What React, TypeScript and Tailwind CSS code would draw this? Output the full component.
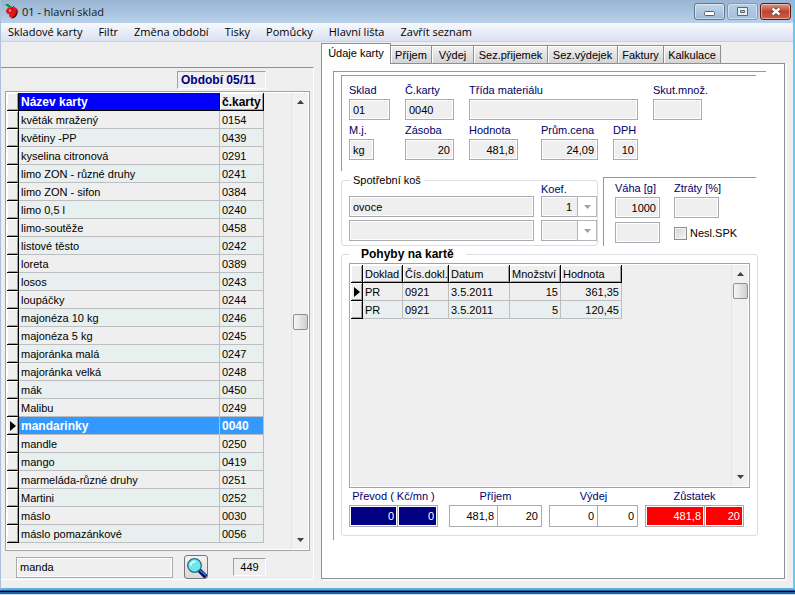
import { useId, type ReactNode } from 'react';

const cards: [string, string][] = [
  ['květák mražený', '0154'],
  ['květiny -PP', '0439'],
  ['kyselina citronová', '0291'],
  ['limo ZON - různé druhy', '0241'],
  ['limo ZON - sifon', '0384'],
  ['limo 0,5 l', '0240'],
  ['limo-soutěže', '0458'],
  ['listové těsto', '0242'],
  ['loreta', '0389'],
  ['losos', '0243'],
  ['loupáčky', '0244'],
  ['majonéza 10 kg', '0246'],
  ['majonéza 5 kg', '0245'],
  ['majoránka malá', '0247'],
  ['majoránka velká', '0248'],
  ['mák', '0450'],
  ['Malibu', '0249'],
  ['mandarinky', '0040'],
  ['mandle', '0250'],
  ['mango', '0419'],
  ['marmeláda-různé druhy', '0251'],
  ['Martini', '0252'],
  ['máslo', '0030'],
  ['máslo pomazánkové', '0056'],
];
const selectedCode = '0040';

const moves = [
  ['PR', '0921', '3.5.2011', '15', '361,35'],
  ['PR', '0921', '3.5.2011', '5', '120,45'],
];

const menu = ['Skladové karty', 'Filtr', 'Změna období', 'Tisky', 'Pomůcky', 'Hlavní lišta', 'Zavřít seznam'];

const tabs = [
  { name: 'Příjem', width: 'w-[41px]' },
  { name: 'Výdej', width: 'w-[42px]' },
  { name: 'Sez.přijemek', width: 'w-[74px]' },
  { name: 'Sez.výdejek', width: 'w-[70px]' },
  { name: 'Faktury', width: 'w-[46px]' },
  { name: 'Kalkulace', width: 'w-[57px]' },
];

const box = 'h-[21px] border border-[#a9abae] bg-[#efefef] px-[3px] text-black shadow-[inset_0_0_0_1px_#fff] outline-none';

function Field({ label, value = '', width, right = false }: { label: string; value?: string; width: string; right?: boolean }) {
  const id = useId();
  return (
    <div className={`flex flex-col ${width}`}>
      <label htmlFor={id} className="h-[17px] whitespace-nowrap text-[#000066]">{label}</label>
      <input id={id} readOnly defaultValue={value} className={`w-full ${box} ${right ? 'text-right' : ''}`} />
    </div>
  );
}

function Triangle({ up = false, gray = false }: { up?: boolean; gray?: boolean }) {
  return (
    <svg width="7" height="4" viewBox="0 0 7 4" aria-hidden="true">
      <path d={up ? 'M0 4L3.5 0L7 4Z' : 'M0 0H7L3.5 4Z'} fill={gray ? '#a0a0a0' : '#404040'} />
    </svg>
  );
}

function ScrollBar({ thumb }: { thumb: string }) {
  return (
    <div className="flex w-[17px] shrink-0 flex-col items-center border-l border-[#e4e4e4] bg-[#f1f1f1]">
      <div className="flex h-[18px] items-center"><Triangle up /></div>
      <div className={`h-4 w-[15px] rounded-xs border border-[#8f8f8f] bg-linear-to-r from-[#f6f6f6] to-[#cfcfcf] ${thumb}`} />
      <div className="mt-auto flex h-[18px] items-center"><Triangle /></div>
    </div>
  );
}

function RowMark({ active = false }: { active?: boolean }) {
  return (
    <td className="h-[18px] border-r border-b border-black bg-[#efefef] p-0 shadow-[inset_1px_1px_0_#fff,inset_-1px_-1px_0_#a0a0a0]">
      {active && (
        <svg width="7" height="10" viewBox="0 0 7 10" className="ml-[3px]" aria-label="Aktuální řádek">
          <path d="M0 0L6 5L0 10Z" fill="#000" />
        </svg>
      )}
    </td>
  );
}

const headCell =
  'h-[18px] border-r border-b border-black p-0 pl-0.5 text-left whitespace-nowrap shadow-[inset_1px_1px_0_#fff,inset_-1px_-1px_0_#a0a0a0]';

function Combo({ label, value }: { label: string; value: string }) {
  return (
    <div className="relative h-[21px] w-14">
      <select aria-label={label} defaultValue={value} className={`w-full appearance-none rounded-none pr-6 [text-align-last:right] ${box}`}>
        <option>{value}</option>
      </select>
      <span className="pointer-events-none absolute top-0 right-0 flex h-[21px] w-5 items-center justify-center border border-[#b4b6b9] bg-white">
        <Triangle gray />
      </span>
    </div>
  );
}

function Total({ label, values, width, first, tone }: { label: string; values: [string, string]; width: string; first: string; tone: string }) {
  return (
    <div role="group" aria-label={label} className={width}>
      <div className="h-[17px] text-center whitespace-nowrap text-[#000066]">{label}</div>
      <div className="flex h-[22px] border border-[#a9abae] bg-white">
        <input readOnly aria-label={`${label} Kč`} defaultValue={values[0]} className={`h-5 border-r border-r-[#a9abae] pr-[3px] text-right shadow-[inset_0_0_0_1px_#fff] outline-none ${first} ${tone}`} />
        <input readOnly aria-label={`${label} množství`} defaultValue={values[1]} className={`h-5 min-w-0 flex-1 pr-[3px] text-right shadow-[inset_0_0_0_1px_#fff] outline-none ${tone}`} />
      </div>
    </div>
  );
}

function WindowButton({ name, look, children }: { name: string; look: string; children: ReactNode }) {
  return (
    <button aria-label={name} className={`flex h-[17px] w-[31px] items-center justify-center rounded-[3px] border shadow-[inset_0_0_0_1px_#ffffff70] ${look}`}>
      {children}
    </button>
  );
}

function TitleBar() {
  return (
    <header className="flex h-[23px] items-center bg-linear-to-b from-[#98b4d2] to-[#b9d1ea] pr-0.5 pl-[3px]">
      <svg width="15" height="17" viewBox="0 0 15 17" aria-hidden="true">
        <path d="M3 6C4 4 7 4 8 5C11 3 14 5 13.500 9C13 13 9 17 6 14C4 13 6 12 5 11C2 11 3 9 2 9C2 8 2 7 3 6Z" fill="#e3141c" />
        <path d="M13 6C15 10 12 16 7 15.500C10 14 12.500 11 13 6Z" fill="#4a0a0a" />
        <path d="M1 1L4 1L8 4L8 5L4 4Z" fill="#128a34" />
        <path d="M7 6L10 3" stroke="#1c3a18" />
        <path d="M5 6.500H7V8.500H5Z" fill="#ff9c90" />
      </svg>
      <h1 className="ml-[3px] font-['Open_Sans',sans-serif] text-[11px] text-[#101820]">01 - hlavní sklad</h1>
      <div className="ml-auto flex gap-0.5">
        <WindowButton name="Minimalizovat" look="border-[#5f7893] bg-linear-to-b from-[#c5d7ea] to-[#9db8d4]">
          <svg width="11" height="5" viewBox="0 0 11 5" className="mt-1"><rect x=".5" y=".5" width="10" height="4" rx="1" fill="#fff" stroke="#53606e" /></svg>
        </WindowButton>
        <WindowButton name="Maximalizovat" look="border-[#8199b5] bg-linear-to-b from-[#b5cce5] to-[#a5c0de]">
          <svg width="11" height="9" viewBox="0 0 11 9"><path d="M.5 .5H10.500V8.500H.5Z M3.500 3.500H7.500V5.500H3.500Z" fill="#e8eef5" stroke="#5b6875" fillRule="evenodd" /></svg>
        </WindowButton>
        <WindowButton name="Zavřít" look="border-[#5b1c16] bg-linear-to-b from-[#dc9687] via-[#bf4430] to-[#c8614c]">
          <svg width="12" height="9" viewBox="0 0 12 9">
            <path d="M2.500 1.500L9.500 7.500M9.500 1.500L2.500 7.500" stroke="#5a3a3a" strokeWidth="4" />
            <path d="M2.500 1.500L9.500 7.500M9.500 1.500L2.500 7.500" stroke="#fff" strokeWidth="2.400" />
          </svg>
        </WindowButton>
      </div>
    </header>
  );
}

function CardList() {
  return (
    <section className="mt-[25px] flex w-[313px] shrink-0 flex-col self-start border-t border-r border-b border-t-[#8c8f94] border-r-white border-b-white pt-[3px] pl-1">
      <div className="mr-[47px] h-[18px] w-[89px] self-end border border-t-[#a0a0a0] border-r-white border-b-white border-l-[#a0a0a0] pl-[3px] text-[12px] leading-4 font-bold text-[#000080]">
        Období 05/11
      </div>
      <div className="mt-0.5 mr-[3px] flex h-[460px] justify-between border border-[#a0a3a8] p-px shadow-[inset_0_0_0_1px_#fff]">
        <table className="w-[257px] table-fixed border-separate border-spacing-0 self-start">
          <colgroup>
            <col className="w-3" />
            <col className="w-[201px]" />
            <col className="w-11" />
          </colgroup>
          <thead className="text-[12px] leading-4">
            <tr>
              <RowMark />
              <th className="h-[18px] border-r border-b border-black bg-[#0000ff] p-0 pl-0.5 text-left text-white">Název karty</th>
              <th className={headCell}>č.karty</th>
            </tr>
          </thead>
          <tbody>
            {cards.map(([name, code], i) => {
              const active = code === selectedCode;
              const tone = active ? 'bg-[#3399ff] text-white font-bold text-[12px]' : i % 2 ? 'bg-[#e8efef]' : 'bg-[#efefef]';
              return (
                <tr key={code} className={tone}>
                  <RowMark active={active} />
                  <td className="h-[18px] border-r border-b border-[#bcbec0] p-0 pl-0.5 leading-4">{name}</td>
                  <td className="h-[18px] border-r border-b border-[#bcbec0] p-0 pl-0.5 leading-4">{code}</td>
                </tr>
              );
            })}
          </tbody>
        </table>
        <ScrollBar thumb="mt-[203px]" />
      </div>
      <form className="mt-1 flex h-6 items-center pl-[11px]">
        <input aria-label="Hledat kartu" defaultValue="manda" className={`w-[157px] ${box}`} />
        <button type="button" aria-label="Hledat" className="ml-[11px] flex h-6 w-6 items-center justify-center rounded-[3px] border border-[#777] bg-linear-to-b from-[#f4f4f4] to-[#d8d8d8]">
          <svg width="21" height="21" viewBox="0 0 21 21" aria-hidden="true">
            <path d="M13 13L20 20" stroke="#0a0a60" strokeWidth="4.500" />
            <path d="M14 13.500L20 18.500" stroke="#2f7de8" strokeWidth="1.600" />
            <circle cx="8.500" cy="8.500" r="6.800" fill="#6fe6ea" stroke="#2c6e80" strokeWidth="1.300" />
            <path d="M4.500 8.500C5 6 7 4.500 9.500 4.500" stroke="#d8ffff" strokeWidth="2" fill="none" />
          </svg>
        </button>
        <output className="ml-[25px] h-[18px] w-[33px] border border-t-[#a0a0a0] border-r-white border-b-white border-l-[#a0a0a0] text-center leading-4">449</output>
      </form>
    </section>
  );
}

function CardDetail() {
  const vaha2 = useId();
  return (
    <section className="mt-px ml-[7px] flex min-w-0 flex-1 flex-col pr-2">
      <div role="tablist" className="flex h-5 items-end">
        <button role="tab" aria-selected="true" className="z-10 -mb-px h-[21px] w-[70px] shrink-0 border border-b-0 border-[#8c8f94] bg-white pb-0.5 whitespace-nowrap">
          Údaje karty
        </button>
        {tabs.map((t) => (
          <button key={t.name} role="tab" aria-selected="false" className={`h-[18px] shrink-0 border border-b-0 border-l-0 border-[#8c8f94] bg-linear-to-b from-[#f2f2f2] to-[#d4d4d4] whitespace-nowrap shadow-[inset_1px_1px_0_#fff] ${t.width}`}>
            {t.name}
          </button>
        ))}
      </div>
      <div role="tabpanel" className="border border-[#8c8f94] bg-white pt-[7px] pr-[18px] pb-[38px] pl-[11px] shadow-[2px_2px_0_#fafafa]">
        <div className="border-t border-l border-[#979797] pt-[3px] pb-1 pl-[7px]">
          <div className="mr-2.5 flex h-24 flex-col gap-0.5 border-t border-l border-[#979797] pt-[6px] pl-[7px]">
            <div className="flex gap-[15px]">
              <Field label="Sklad" value="01" width="w-[41px]" />
              <Field label="Č.karty" value="0040" width="w-[49px]" />
              <Field label="Třída materiálu" width="w-[169px]" />
              <Field label="Skut.množ." width="w-[49px]" />
            </div>
            <div className="flex gap-[15px]">
              <div className="w-[41px]"><Field label="M.j." value="kg" width="w-[25px]" /></div>
              <Field label="Zásoba" value="20" right width="w-[49px]" />
              <div className="w-[57px]"><Field label="Hodnota" value="481,8" right width="w-[49px]" /></div>
              <Field label="Prům.cena" value="24,09" right width="w-[57px]" />
              <Field label="DPH" value="10" right width="w-[25px]" />
            </div>
          </div>
          <div className="mt-px flex h-[74px] gap-[5px]">
            <fieldset className="w-[257px] rounded-[3px] border border-[#d5dfe5] pl-[7px]">
              <legend className="ml-px h-4 px-[3px] leading-4">Spotřební koš</legend>
              <div className="flex gap-[7px] pt-2">
                <div className="flex w-[185px] flex-col gap-[3px]">
                  <input aria-label="Spotřební koš 1" readOnly defaultValue="ovoce" className={`w-full ${box}`} />
                  <input aria-label="Spotřební koš 2" readOnly className={`w-full ${box}`} />
                </div>
                <div className="-mt-[14px]">
                  <div className="h-[14px] leading-[14px] text-[#000066]">Koef.</div>
                  <div className="flex flex-col gap-[3px]">
                    <Combo label="Koef. 1" value="1" />
                    <Combo label="Koef. 2" value="" />
                  </div>
                </div>
              </div>
            </fieldset>
            <div className="mt-[5px] mr-2.5 flex flex-1 gap-[14px] border-t border-l border-[#979797] pt-0.5 pl-[11px]">
              <div className="flex flex-col gap-1">
                <Field label="Váha [g]" value="1000" right width="w-[45px]" />
                <input id={vaha2} aria-label="Váha 2" readOnly className={`w-[45px] ${box}`} />
              </div>
              <div>
                <Field label="Ztráty [%]" width="w-[45px]" />
                <label className="mt-[7px] flex items-center gap-[3px] whitespace-nowrap">
                  <input type="checkbox" className="h-[13px] w-[13px] appearance-none border border-[#8e8f8f] bg-linear-to-br from-[#cfd3d8] to-[#f6f6f6] shadow-[inset_0_0_0_1px_#f4f4f4]" />
                  Nesl.SPK
                </label>
              </div>
            </div>
          </div>
          <fieldset className="mr-2 rounded-[3px] border border-[#d5dfe5] pt-px pr-[7px] pb-2 pl-[7px]">
            <legend className="h-4 pr-3 pl-3 text-[12px] leading-4 font-bold">Pohyby na kartě</legend>
            <div className="flex h-[225px] justify-between border border-[#a0a3a8] bg-[#efefef] p-px shadow-[inset_0_0_0_1px_#fff]">
              <table className="w-[271px] table-fixed border-separate border-spacing-0 self-start">
                <colgroup>
                  <col className="w-3" />
                  <col className="w-10" />
                  <col className="w-[46px]" />
                  <col className="w-[61px]" />
                  <col className="w-[51px]" />
                  <col className="w-[61px]" />
                </colgroup>
                <thead>
                  <tr>
                    <RowMark />
                    {['Doklad', 'Čís.dokl.', 'Datum', 'Množství', 'Hodnota'].map((h) => (
                      <th key={h} className={`font-normal ${headCell}`}>{h}</th>
                    ))}
                  </tr>
                </thead>
                <tbody>
                  {moves.map((row, i) => (
                    <tr key={row[4]} className={i % 2 ? 'bg-[#e8efef]' : 'bg-[#efefef]'}>
                      <RowMark active={i === 0} />
                      {row.map((cell, c) => (
                        <td key={c} className={`h-[18px] border-r border-b border-[#bcbec0] p-0 px-0.5 leading-4 ${c > 2 ? 'text-right' : ''}`}>{cell}</td>
                      ))}
                    </tr>
                  ))}
                </tbody>
              </table>
              <ScrollBar thumb="" />
            </div>
            <div className="flex">
              <Total label="Převod ( Kč/mn )" values={['0', '0']} width="w-[89px]" first="w-12" tone="bg-[#000080] text-white" />
              <Total label="Příjem" values={['481,8', '20']} width="ml-[11px] w-[93px]" first="w-12" tone="bg-white text-black" />
              <Total label="Výdej" values={['0', '0']} width="ml-[7px] w-[89px]" first="w-12" tone="bg-white text-black" />
              <Total label="Zůstatek" values={['481,8', '20']} width="ml-[7px] w-[99px]" first="w-[59px]" tone="bg-[#ff0000] text-white" />
            </div>
          </fieldset>
        </div>
      </div>
    </section>
  );
}

export default function App() {
  return (
    <div className="flex min-h-screen flex-col bg-[#1c5fa6] font-['Liberation_Sans',Arial,sans-serif] text-[11px] leading-4 text-black">
      <div className="flex-1 border-b border-b-black">
        <div className="flex min-h-full flex-col border-r-2 border-b-2 border-l border-r-[#5fcdf5] border-b-[#5bb4d4] border-l-[#a9c0d8] bg-[#efefef]">
          <TitleBar />
          <nav className="flex h-[19px] items-center gap-4 border-b border-[#c8d0e2] bg-linear-to-b from-[#f8f9fd] to-[#dbe1f1] pl-[7px] font-['Open_Sans',sans-serif] text-[11px]">
            {menu.map((m) => (
              <button key={m} className="whitespace-nowrap">{m}</button>
            ))}
          </nav>
          <main className="flex flex-1 pb-2">
            <CardList />
            <CardDetail />
          </main>
        </div>
      </div>
      <footer className="h-[3px] border-b border-[#cfe0f0] bg-[#1c5fa6]" />
    </div>
  );
}
